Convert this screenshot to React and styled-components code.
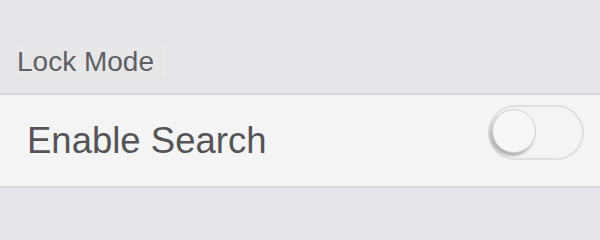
import React, { useState } from 'react';
import styled, { createGlobalStyle } from 'styled-components';

const GlobalStyle = createGlobalStyle`
  html, body {
    margin: 0;
    padding: 0;
    background: #e5e5e9;
    font-family: 'Liberation Sans', Arial, sans-serif;
  }
`;

const Page = styled.div`
  width: 600px;
  height: 209px;
  background: #e5e5e9;
  overflow: hidden;
`;

const SectionHeader = styled.div`
  padding: 46px 0 15px 17px;
  font-size: 28px;
  line-height: 32px;
  color: #606064;
`;

const HeaderLabel = styled.span`
  display: inline-block;
  padding-right: 12px;
  background: #e7e7ea;
`;

const Row = styled.div`
  display: flex;
  align-items: center;
  justify-content: space-between;
  height: 91px;
  padding: 0 16px 0 27px;
  background: #f4f4f4;
  border-top: 2px solid #d8d8dc;
  border-bottom: 2px solid #d8d8dc;
`;

const RowLabel = styled.span`
  font-size: 36.5px;
  color: #545457;
`;

const Track = styled.button`
  position: relative;
  width: 96px;
  height: 55px;
  margin-bottom: 16px;
  padding: 0;
  border: 2px solid #e0e0e2;
  border-radius: 28px;
  background: ${(p) => (p.on ? '#4cd964' : '#f4f4f4')};
  cursor: pointer;
  box-sizing: border-box;
`;

const Knob = styled.span`
  position: absolute;
  top: 2px;
  left: ${(p) => (p.on ? '44px' : '2px')};
  width: 44px;
  height: 44px;
  border-radius: 50%;
  background: #f6f6f6;
  border: 1px solid #d0d0d2;
  box-sizing: border-box;
  box-shadow: -2px 3px 3px rgba(0, 0, 0, 0.28);
`;

const Toggle = () => {
  const [on, setOn] = useState(false);
  return (
    <Track on={on ? 1 : 0} onClick={() => setOn(!on)} aria-pressed={on}>
      <Knob on={on ? 1 : 0} />
    </Track>
  );
};

export default function App() {
  return (
    <Page>
      <GlobalStyle />
      <SectionHeader>
        <HeaderLabel>Lock Mode</HeaderLabel>
      </SectionHeader>
      <Row>
        <RowLabel>Enable Search</RowLabel>
        <Toggle />
      </Row>
    </Page>
  );
}
